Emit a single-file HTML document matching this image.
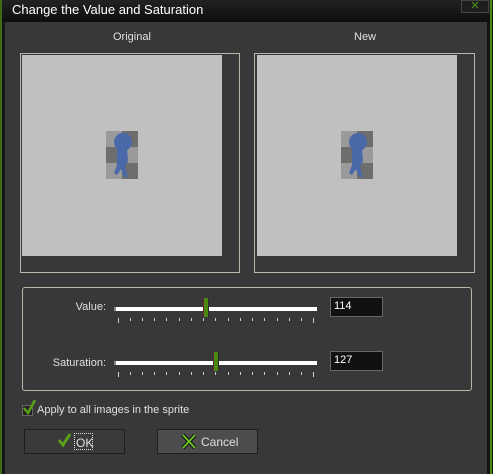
<!DOCTYPE html><html><head><style>
body{margin:0;width:493px;height:474px;background:#141414;position:relative;overflow:hidden;font-family:"Liberation Sans",sans-serif;font-size:11px;color:#e0e0e0}
div{position:absolute;box-sizing:border-box}
.pan{border:1px solid #b8b8a8;background:#383838}
.in{background:#c0c0c0}
.tb{background:#111;border:1px solid #666;color:#fff;padding:2px 3px;font-size:11px}
.trk{height:4px;background:#fff;border-left:2px solid #888}
.th{width:6px;height:19px;background:#4a8a10;border-right:1px solid #2a2a2a;border-left:1px solid #6b2040}
.lbl{text-align:right;width:90px}
</style></head><body>
<div style="left:0;top:0;width:493px;height:22px;background:linear-gradient(#222,#0e0e0e)"></div>
<div style="left:12px;top:2px;font-size:13px;color:#fff">Change the Value and Saturation</div>
<div style="left:461px;top:0;width:28px;height:13px;border:1px solid #444;background:#1e1e1e;color:#4a9a18;font-size:11px;text-align:center;line-height:11px">✕</div>
<div style="left:0;top:0;width:2px;height:474px;background:#3e6a18"></div>
<div style="left:490px;top:0;width:2px;height:474px;background:#4a8a10"></div>
<div style="left:5px;top:22px;width:482px;height:452px;background:#383838"></div>
<div style="left:113px;top:31px">Original</div>
<div style="left:354px;top:31px">New</div>
<div class="pan" style="left:20px;top:53px;width:220px;height:220px"><div class="in" style="left:1px;top:1px;width:200px;height:201px"></div></div>
<div class="pan" style="left:254px;top:53px;width:221px;height:220px"><div class="in" style="left:2px;top:1px;width:200px;height:201px"></div></div>
<svg style="position:absolute;left:106px;top:131px" width="32" height="48"><rect width="32" height="48" fill="#9a9a9a"/><rect x="16" width="16" height="16" fill="#6e6e6e"/><rect y="16" width="16" height="16" fill="#6e6e6e"/><rect x="16" y="32" width="16" height="16" fill="#6e6e6e"/><circle cx="17" cy="11" r="9" fill="#4a69a8"/><path d="M11 17 L21 17 L22 30 L19 36 L22 46 L18 46 L15 38 L11 44 L8 42 L11 34 Z" fill="#4a69a8"/></svg>
<svg style="position:absolute;left:341px;top:131px" width="32" height="48"><rect width="32" height="48" fill="#9a9a9a"/><rect x="16" width="16" height="16" fill="#6e6e6e"/><rect y="16" width="16" height="16" fill="#6e6e6e"/><rect x="16" y="32" width="16" height="16" fill="#6e6e6e"/><circle cx="17" cy="11" r="9" fill="#4a69a8"/><path d="M11 17 L21 17 L22 30 L19 36 L22 46 L18 46 L15 38 L11 44 L8 42 L11 34 Z" fill="#4a69a8"/></svg>
<div style="left:22px;top:287px;width:450px;height:104px;border:1px solid #b8b8a8;border-radius:3px"></div>
<div class="lbl" style="left:16px;top:301px">Value:</div>
<div class="trk" style="left:114px;top:307px;width:203px"></div>
<div class="th" style="left:203px;top:298px"></div>
<div class="tb" style="left:330px;top:297px;width:53px;height:20px">114</div>
<div class="lbl" style="left:16px;top:357px">Saturation:</div>
<div class="trk" style="left:114px;top:361px;width:203px"></div>
<div class="th" style="left:213px;top:352px"></div>
<div class="tb" style="left:330px;top:351px;width:53px;height:20px">127</div>
<div style="left:37px;top:404px">Apply to all images in the sprite</div>
<div style="left:24px;top:429px;width:101px;height:25px;border:1px solid #1e1e1e;background:#3a3a3a"></div>
<div style="left:74px;top:433px;width:19px;height:17px;border:1px dotted #ddd;padding:2px 1px;font-size:12px">OK</div>
<div style="left:157px;top:429px;width:101px;height:25px;border:1px solid #1e1e1e;background:#4c4c4c"></div>
<div style="left:201px;top:435px;font-size:12px">Cancel</div>
<svg style="position:absolute;left:0;top:0" width="493" height="474"><g stroke="#ccc" stroke-width="1">
<path d="M118.5 318v5M130.5 318v3M142.5 318v3M154.5 318v3M166.5 318v3M179.5 318v3M191.5 318v3M203.5 318v3M215.5 318v3M228.5 318v3M240.5 318v3M252.5 318v3M264.5 318v3M277.5 318v3M289.5 318v3M301.5 318v3M313.5 318v5"/>
<path d="M118.5 372v5M130.5 372v3M142.5 372v3M154.5 372v3M166.5 372v3M179.5 372v3M191.5 372v3M203.5 372v3M215.5 372v3M228.5 372v3M240.5 372v3M252.5 372v3M264.5 372v3M277.5 372v3M289.5 372v3M301.5 372v3M313.5 372v5"/></g>
<rect x="22.5" y="405.5" width="10" height="10" fill="#222" stroke="#666"/>
<path d="M24 408 L28 413 L35 400" stroke="#5aa018" stroke-width="2.5" fill="none"/>
<path d="M59 440 L63 445 L70 434" stroke="#5aa018" stroke-width="3" fill="none"/>
<path d="M183 435 L195 448 M195 435 L183 448" stroke="#111" stroke-width="4"/>
<path d="M183 435 L195 448 M195 435 L183 448" stroke="#6cc020" stroke-width="2"/></svg>
</body></html>
